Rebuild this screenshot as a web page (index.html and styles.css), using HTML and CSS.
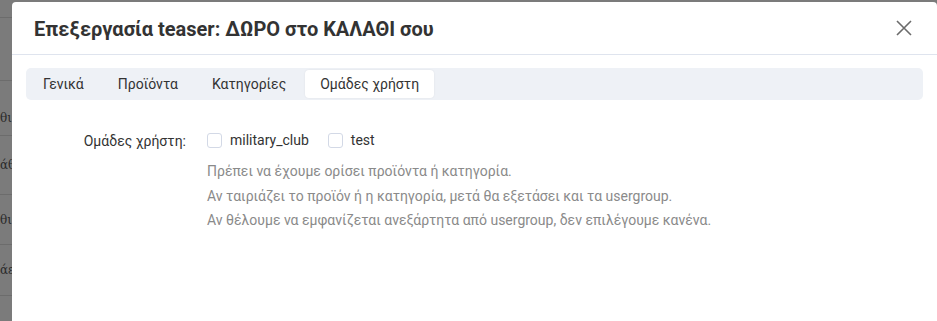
FILE: index.html
```html
<!DOCTYPE html>
<html>
  <head>
    <title>Επεξεργασία teaser</title>
    <link rel="stylesheet" href="styles.css">
  </head>
  <body>
    <div class="page">
      <div class="row r1"></div>
      <div class="row r2"><span>θι</span></div>
      <div class="row r3"><span>άθ</span></div>
      <div class="row r4"><span>θι</span></div>
      <div class="row r5"><span>άε</span></div>
      <div class="row r6"></div>
    </div>

    <div class="modal">
      <div class="modal-header">
        <h1>Επεξεργασία teaser: ΔΩΡΟ στο ΚΑΛΑΘΙ σου</h1>
        <button class="close" aria-label="close">
          <svg width="18" height="18" viewBox="0 0 18 18">
            <path d="M2 2 L16 16 M16 2 L2 16" stroke="#6b6b6b" stroke-width="1.6" fill="none"/>
          </svg>
        </button>
      </div>
      <div class="modal-body">
        <div class="tabs">
          <div class="tab">Γενικά</div>
          <div class="tab">Προϊόντα</div>
          <div class="tab">Κατηγορίες</div>
          <div class="tab active">Ομάδες χρήστη</div>
        </div>

        <div class="field">
          <label class="field-label">Ομάδες χρήστη:</label>
          <div class="field-control">
            <div class="checks">
              <label class="check"><span class="box"></span>military_club</label>
              <label class="check"><span class="box"></span>test</label>
            </div>
            <div class="help">
              <p>Πρέπει να έχουμε ορίσει προϊόντα ή κατηγορία.</p>
              <p>Αν ταιριάζει το προϊόν ή η κατηγορία, μετά θα εξετάσει και τα usergroup.</p>
              <p>Αν θέλουμε να εμφανίζεται ανεξάρτητα από usergroup, δεν επιλέγουμε κανένα.</p>
            </div>
          </div>
        </div>
      </div>
    </div>
  </body>
</html>
```

FILE: styles.css
```css
body {
  margin: 0;
  height: 321px;
  overflow: hidden;
  background: #7b7b7b;
  font-family: Roboto, "Noto Sans", sans-serif;
}

.page {
  width: 14px;
  overflow: hidden;
  padding-top: 17px;
}
.row {
  border-top: 1px solid #6c6c6c;
  display: flex;
  align-items: center;
  font-family: "DejaVu Serif", serif;
  font-size: 12px;
  color: #2a2a2a;
}
.r1 { height: 62px; }
.r2 { height: 55px; padding-top: 20px; box-sizing: border-box; }
.r3 { height: 58px; }
.r4 { height: 49px; }
.r5 { height: 50px; }
.r6 { height: 40px; }

.modal {
  position: fixed;
  top: 2px;
  left: 12px;
  right: 0;
  bottom: 0;
  background: #fff;
  border-radius: 4px 4px 0 0;
}

.modal-header {
  height: 52px;
  border-bottom: 1px solid #dfe4ee;
  display: flex;
  align-items: center;
  justify-content: space-between;
  padding: 0 24px 0 22px;
}
.modal-header h1 {
  margin: 0;
  font-size: 20px;
  font-weight: 700;
  color: #333;
  padding-top: 2px;
}
.close {
  border: 0;
  background: none;
  padding: 0;
  width: 18px;
  height: 18px;
  cursor: pointer;
}

.modal-body {
  padding: 13px 14px;
}

.tabs {
  display: flex;
  background: #eef1f6;
  border-radius: 5px;
  padding: 2px;
  height: 28px;
}
.tab {
  padding: 0 14px 0 15px;
  margin-right: 5px;
  display: flex;
  align-items: center;
  font-size: 14px;
  color: #333;
  border-radius: 4px;
}
.tab.active {
  background: #fff;
  box-shadow: 0 0 2px rgba(0, 0, 0, 0.08);
  padding: 0 15px;
}

.field {
  display: flex;
  margin-top: 32px;
}
.field-label {
  width: 160px;
  text-align: right;
  font-size: 14px;
  color: #333;
  padding-top: 1px;
}
.field-control {
  margin-left: 21px;
}
.checks {
  display: flex;
  gap: 19px;
}
.check {
  display: flex;
  align-items: center;
  font-size: 14px;
  color: #333;
}
.box {
  width: 13px;
  height: 13px;
  border: 1px solid #d3d9e6;
  border-radius: 3px;
  margin-right: 8px;
}
.help {
  margin-top: 11px;
}
.help p {
  margin: 0;
  font-size: 14px;
  line-height: 24.5px;
  color: #8a8a8a;
}
```
